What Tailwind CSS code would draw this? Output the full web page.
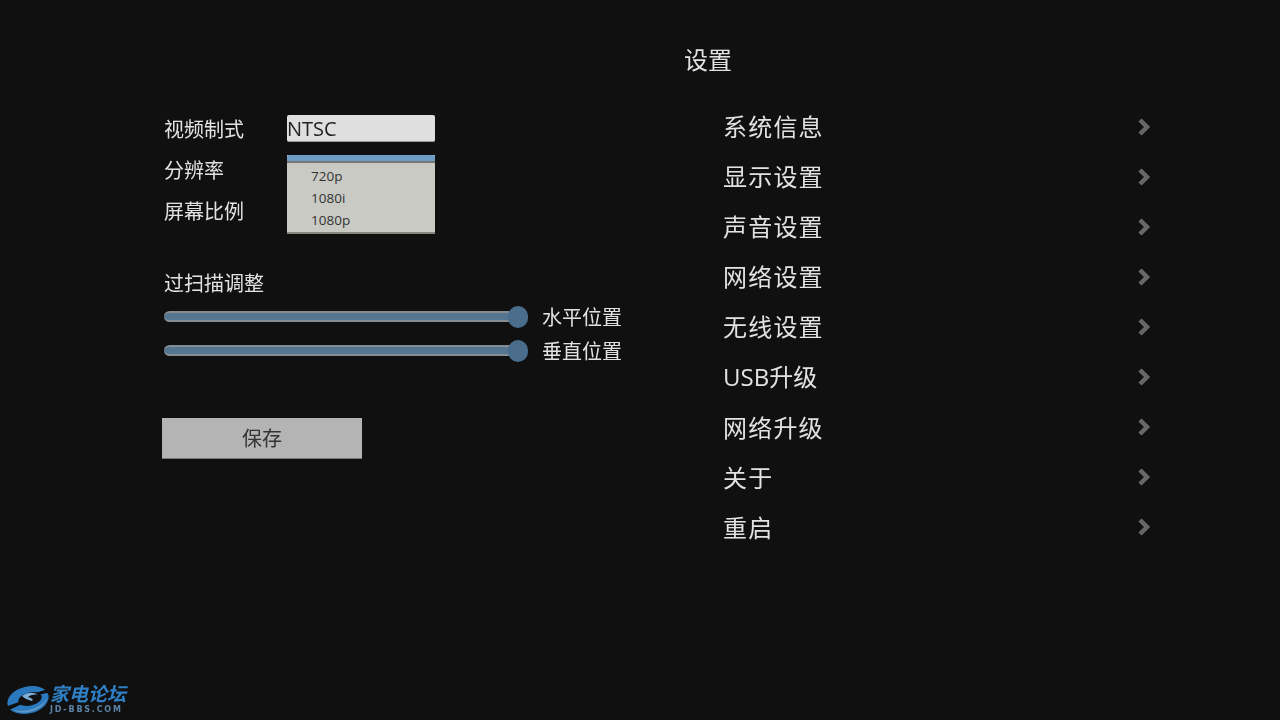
<!DOCTYPE html>
<html lang="zh-CN">
<head>
  <meta charset="UTF-8" />
  <title>设置</title>
  <script src="https://cdn.jsdelivr.net/npm/@tailwindcss/browser@4"></script>
</head>
<body class="bg-[#101010] overflow-hidden">
  <div class="relative flex w-[1280px] h-[720px] blur-[0.4px] text-[#e2e2e2] font-['Open_Sans','Noto_Sans_CJK_SC',sans-serif]">

    <!-- left: video settings -->
    <div class="w-[684px] shrink-0 pl-[164px] pt-[109px] text-[20px]">
      <div class="flex items-center h-[41px]">
        <span class="w-[123px]">视频制式</span>
        <div class="relative w-[148px] h-[27px] mb-[3px] bg-[#dfdfdf] rounded-[2px] border-b border-[#999] text-[#222] text-[20px] leading-[27px]">NTSC</div>
      </div>
      <div class="flex items-center h-[41px]">
        <span class="w-[123px]">分辨率</span>
      </div>
      <div class="flex items-center h-[41px]">
        <span class="w-[123px]">屏幕比例</span>
      </div>

      <div class="flex items-center h-[30px] mt-[37px]">过扫描调整</div>
      <div class="flex items-center h-[34px] mt-px">
        <div class="relative w-[354px] h-[11px] mb-[2px] rounded-full bg-[#557691] border-y-2 border-[#858d93]">
          <div class="absolute right-[-10px] top-[-7px] w-[20px] h-[22px] rounded-full bg-[#4a6d8c] blur-[0.6px]"></div>
        </div>
        <span class="ml-[24px] pt-[2px]">水平位置</span>
      </div>
      <div class="flex items-center h-[34px]">
        <div class="relative w-[354px] h-[11px] mb-[2px] rounded-full bg-[#557691] border-y-2 border-[#858d93]">
          <div class="absolute right-[-10px] top-[-7px] w-[20px] h-[22px] rounded-full bg-[#4a6d8c] blur-[0.6px]"></div>
        </div>
        <span class="ml-[24px] pt-[2px]">垂直位置</span>
      </div>

      <button class="block w-[200px] h-[41px] ml-[-2px] mt-[50px] pt-px bg-[#b4b4b4] border-b border-[#777] text-[#333] text-[20px]">保存</button>
    </div>

    <!-- right: menu -->
    <div class="flex-1 pt-[44px]">
      <h1 class="h-[32px] leading-[32px] text-[24px] font-normal">设置</h1>
      <ul class="mt-[26px] ml-[39px] w-[428px] text-[24px]">
        <li class="flex items-center justify-between h-[50px]"><span class="tracking-[1.2px]">系统信息</span>
          <svg class="w-[14px] h-[20px]" viewBox="0 0 14 20"><path d="M3 3l7 7-7 7" fill="none" stroke="#686868" stroke-width="4.5"/></svg>
        </li>
        <li class="flex items-center justify-between h-[50px]"><span class="tracking-[1.2px]">显示设置</span>
          <svg class="w-[14px] h-[20px]" viewBox="0 0 14 20"><path d="M3 3l7 7-7 7" fill="none" stroke="#686868" stroke-width="4.5"/></svg>
        </li>
        <li class="flex items-center justify-between h-[50px]"><span class="tracking-[1.2px]">声音设置</span>
          <svg class="w-[14px] h-[20px]" viewBox="0 0 14 20"><path d="M3 3l7 7-7 7" fill="none" stroke="#686868" stroke-width="4.5"/></svg>
        </li>
        <li class="flex items-center justify-between h-[50px]"><span class="tracking-[1.2px]">网络设置</span>
          <svg class="w-[14px] h-[20px]" viewBox="0 0 14 20"><path d="M3 3l7 7-7 7" fill="none" stroke="#686868" stroke-width="4.5"/></svg>
        </li>
        <li class="flex items-center justify-between h-[50px]"><span class="tracking-[1.2px]">无线设置</span>
          <svg class="w-[14px] h-[20px]" viewBox="0 0 14 20"><path d="M3 3l7 7-7 7" fill="none" stroke="#686868" stroke-width="4.5"/></svg>
        </li>
        <li class="flex items-center justify-between h-[50px]"><span>USB升级</span>
          <svg class="w-[14px] h-[20px]" viewBox="0 0 14 20"><path d="M3 3l7 7-7 7" fill="none" stroke="#686868" stroke-width="4.5"/></svg>
        </li>
        <li class="flex items-center justify-between h-[50px]"><span class="tracking-[1.2px] pt-[2px]">网络升级</span>
          <svg class="w-[14px] h-[20px]" viewBox="0 0 14 20"><path d="M3 3l7 7-7 7" fill="none" stroke="#686868" stroke-width="4.5"/></svg>
        </li>
        <li class="flex items-center justify-between h-[50px]"><span class="tracking-[1.2px] pt-[2px]">关于</span>
          <svg class="w-[14px] h-[20px]" viewBox="0 0 14 20"><path d="M3 3l7 7-7 7" fill="none" stroke="#686868" stroke-width="4.5"/></svg>
        </li>
        <li class="flex items-center justify-between h-[50px]"><span class="tracking-[1.2px] pt-[2px]">重启</span>
          <svg class="w-[14px] h-[20px]" viewBox="0 0 14 20"><path d="M3 3l7 7-7 7" fill="none" stroke="#686868" stroke-width="4.5"/></svg>
        </li>
      </ul>
    </div>

    <!-- open dropdown -->
    <div class="absolute left-[287px] top-[155px] w-[148px] h-[79px] bg-[#c9cac4] border-b-2 border-[#85867f] text-[#333] text-[13.5px]">
      <div class="h-[8px] bg-[#6f9cc4] border-b-2 border-[#777] rounded-t-[2px]"></div>
      <div class="pl-[24px] pt-[2px]">
        <div class="h-[22px] leading-[22px]">720p</div>
        <div class="h-[22px] leading-[22px]">1080i</div>
        <div class="h-[22px] leading-[22px]">1080p</div>
      </div>
    </div>

    <!-- logo -->
    <div class="absolute left-[5px] top-[683px] flex items-start">
      <svg class="w-[44px] h-[34px]" viewBox="0 0 44 34">
        <ellipse cx="23" cy="17" rx="21" ry="13.5" transform="rotate(-14 23 17)" fill="#2a78bd"/>
        <path d="M8 27C16 32 34 30 41 18L43 12C40 24 22 30 8 27z" fill="#5f97c6"/>
        <ellipse cx="25" cy="16" rx="12" ry="6.5" transform="rotate(-14 25 16)" fill="#101010"/>
        <path d="M17 13C22 9 30 9 33 12 30 11 25 12 23 14 26 15 29 16 27 18 24 17 20 16 17 13z" fill="#7fb0d8"/>
        <path d="M46 5L30 10 33 12 46 9z" fill="#101010"/>
        <path d="M0 24L14 19 17 21 2 28z" fill="#101010"/>
      </svg>
      <div class="ml-[1px] -mt-[1px] w-[76px]">
        <div class="text-[19px] leading-[24px] italic font-bold text-[#2f7fc4] whitespace-nowrap">家电论坛</div>
        <div class="text-[8px] leading-[8px] font-bold text-[#5b84a8] tracking-[1.8px] font-['DejaVu_Sans',sans-serif] whitespace-nowrap">JD-BBS.COM</div>
      </div>
    </div>
  </div>
</body>
</html>
